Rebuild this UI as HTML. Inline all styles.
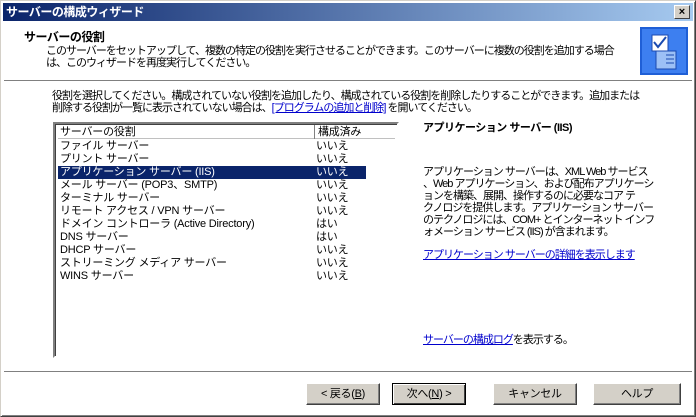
<!DOCTYPE html>
<html><head><meta charset="utf-8"><style>
*{margin:0;padding:0;box-sizing:border-box}
body{width:696px;height:417px;overflow:hidden;background:#fff;font-family:"Liberation Sans","Noto Sans CJK JP",sans-serif;font-size:11px;letter-spacing:-1px;color:#000;position:relative}
.win{position:absolute;left:0;top:0;width:696px;height:417px;border:1px solid #d4d0c8;border-right-color:#404040;border-bottom-color:#404040;box-shadow:inset 1px 1px 0 #fff,inset -1px -1px 0 #808080}
.title{position:absolute;left:3px;top:3px;width:690px;height:18px;background:linear-gradient(90deg,#0a246a,#a6caf0);color:#fff;font-weight:bold;font-size:12px;line-height:18px;padding-left:3px;letter-spacing:-0.5px}
.x{position:absolute;right:3px;top:2px;width:16px;height:14px;background:#d4d0c8;border:1px solid;border-color:#fff #404040 #404040 #fff;color:#000;font-size:11px;line-height:12px;text-align:center;font-weight:bold;letter-spacing:0}
.a{position:absolute;white-space:nowrap;line-height:12px}
.sep{position:absolute;left:4px;width:688px;height:2px;border-top:1px solid #808080;border-bottom:1px solid #fff}
a{color:#0000cc;text-decoration:underline}
.list{position:absolute;left:53px;top:122px;width:346px;height:236px;border:2px solid;border-color:#808080 #fff #fff #808080;box-shadow:inset 1px 1px 0 #404040;letter-spacing:-0.2px}
.row{position:absolute;left:3px;width:308px;height:13px;line-height:13px;padding-left:2px}
.row span{position:absolute;left:258px}
.hdr{position:absolute;left:3px;top:1px;width:337px;height:14px;border-bottom:1px solid #c0c0c0;line-height:14px}
.btn{position:absolute;top:383px;height:22px;background:#d4d0c8;border:1px solid;border-color:#fff #404040 #404040 #fff;box-shadow:inset -1px -1px 0 #808080;text-align:center;line-height:20px;letter-spacing:-0.3px}
</style></head><body>
<div class="win"></div>
<div class="title">サーバーの構成ウィザード<div class="x">×</div></div>
<div class="a" style="left:24px;top:31px;font-weight:bold;font-size:12px;letter-spacing:-0.5px">サーバーの役割</div>
<div class="a" style="left:46px;top:45px">このサーバーをセットアップして、複数の特定の役割を実行させることができます。このサーバーに複数の役割を追加する場合</div>
<div class="a" style="left:46px;top:57px">は、このウィザードを再度実行してください。</div>
<svg style="position:absolute;left:640px;top:27px" width="48" height="48"><rect width="48" height="48" fill="#1f5fd6"/><rect x="2" y="2" width="44" height="44" fill="#3d7ff0"/><rect x="12" y="8" width="16" height="16" fill="#fff" stroke="#1a4ab0"/><path d="M14 15l4 5 8-10" stroke="#1a4ab0" stroke-width="2" fill="none"/><rect x="16" y="24" width="20" height="18" fill="#9cc0f6" stroke="#1a4ab0"/><path d="M26 28h8M26 32h8M26 36h8" stroke="#1a4ab0"/></svg>
<div class="sep" style="top:80px"></div>
<div class="a" style="left:52px;top:90px">役割を選択してください。構成されていない役割を追加したり、構成されている役割を削除したりすることができます。追加または</div>
<div class="a" style="left:52px;top:102px">削除する役割が一覧に表示されていない場合は、<a>[プログラムの追加と削除]</a> を開いてください。</div>
<div class="list">
<div class="hdr"><span style="position:absolute;left:2px;top:0">サーバーの役割</span><span style="position:absolute;left:256px;top:0;height:14px;border-left:1px solid #808080"></span><span style="position:absolute;left:260px;top:0">構成済み</span></div>
<div class="row" style="top:16px">ファイル サーバー<span>いいえ</span></div>
<div class="row" style="top:29px">プリント サーバー<span>いいえ</span></div>
<div class="row" style="top:42px;background:#0a246a;color:#fff">アプリケーション サーバー (IIS)<span>いいえ</span></div>
<div class="row" style="top:55px">メール サーバー (POP3、SMTP)<span>いいえ</span></div>
<div class="row" style="top:68px">ターミナル サーバー<span>いいえ</span></div>
<div class="row" style="top:81px">リモート アクセス / VPN サーバー<span>いいえ</span></div>
<div class="row" style="top:94px">ドメイン コントローラ (Active Directory)<span>はい</span></div>
<div class="row" style="top:107px">DNS サーバー<span>はい</span></div>
<div class="row" style="top:120px">DHCP サーバー<span>いいえ</span></div>
<div class="row" style="top:133px">ストリーミング メディア サーバー<span>いいえ</span></div>
<div class="row" style="top:146px">WINS サーバー<span>いいえ</span></div>
</div>
<div class="a" style="left:423px;top:122px;font-weight:bold;letter-spacing:-0.5px">アプリケーション サーバー (IIS)</div>
<div class="a" style="left:423px;top:166px">アプリケーション サーバーは、XML Web サービス<br>、Web アプリケーション、および配布アプリケーシ<br>ョンを構築、展開、操作するのに必要なコア テ<br>クノロジを提供します。アプリケーション サーバー<br>のテクノロジには、COM+ とインターネット インフ<br>ォメーション サービス (IIS) が含まれます。</div>
<div class="a" style="left:423px;top:249px"><a>アプリケーション サーバーの詳細を表示します</a></div>
<div class="a" style="left:423px;top:334px"><a>サーバーの構成ログ</a>を表示する。</div>
<div class="sep" style="top:371px"></div>
<div class="btn" style="left:306px;width:74px">&lt; 戻る(<u>B</u>)</div>
<div class="btn" style="left:392px;width:74px;border:1px solid #000;box-shadow:inset 1px 1px 0 #fff,inset -1px -1px 0 #404040">次へ(<u>N</u>) &gt;</div>
<div class="btn" style="left:493px;width:84px">キャンセル</div>
<div class="btn" style="left:593px;width:88px">ヘルプ</div>
</body></html>
